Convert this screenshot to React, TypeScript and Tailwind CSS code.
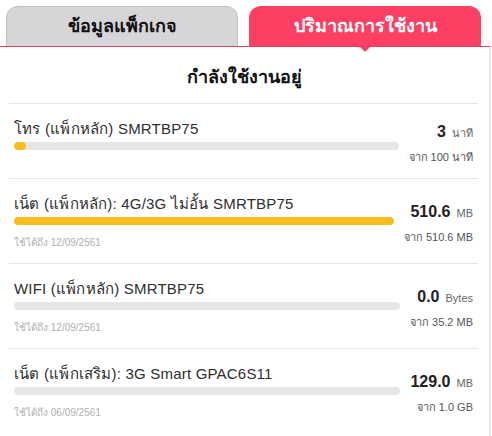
import React from 'react';

type Usage = {
  title: string;
  used: number;
  total: number;
  value: string;
  unit: string;
  of: string;
  expire?: string;
};

const rows: Usage[] = [
  { title: 'โทร (แพ็กหลัก) SMRTBP75', used: 3, total: 100, value: '3', unit: 'นาที', of: 'จาก 100 นาที' },
  { title: 'เน็ต (แพ็กหลัก): 4G/3G ไม่อั้น SMRTBP75', used: 510.6, total: 510.6, value: '510.6', unit: 'MB', of: 'จาก 510.6 MB', expire: '12/09/2561' },
  { title: 'WIFI (แพ็กหลัก) SMRTBP75', used: 0, total: 35.2, value: '0.0', unit: 'Bytes', of: 'จาก 35.2 MB', expire: '12/09/2561' },
  { title: 'เน็ต (แพ็กเสริม): 3G Smart GPAC6S11', used: 0, total: 1024, value: '129.0', unit: 'MB', of: 'จาก 1.0 GB', expire: '06/09/2561' },
];

function UsageRow({ row }: { row: Usage }) {
  const pct = Math.min(100, (row.used / row.total) * 100);
  return (
    <div className="flex items-center gap-[10px] border-t border-[#e6e6e6] pt-[15px] pb-[13px] pl-[5px] pr-[5px]">
      <div className="flex-1 self-start">
        <p className="text-[15px] leading-[20px] text-[#2e2e2e] tracking-[0.2px]">{row.title}</p>
        <div className="mt-[3px] h-[8px] rounded-full bg-[#e6e6e6] overflow-hidden">
          {pct > 0 && <div className="h-full min-w-[12px] rounded-full bg-[#fbbd1e]" style={{ width: `${pct}%` }} />}
        </div>
        {row.expire && (
          <p className="mt-[11px] text-[10px] leading-[14px] text-[#b0b0b0]">ใช้ได้ถึง {row.expire}</p>
        )}
      </div>
      <div className="pt-[3px] text-right">
        <p className="leading-[20px] text-[#222]">
          <span className="text-[16px] font-bold">{row.value}</span>
          <span className="ml-[6px] text-[11px] text-[#666]">{row.unit}</span>
        </p>
        <p className="mt-[6px] text-[11px] leading-[16px] text-[#555]">{row.of}</p>
      </div>
    </div>
  );
}

export default function App() {
  return (
    <div className="w-[492px] h-[436px] bg-white overflow-hidden font-['Liberation_Sans',sans-serif]">
      <div className="flex gap-[11px] pl-[6px] pt-[6px]">
        <div className="w-[232px] h-[40px] flex items-center justify-center rounded-t-[12px] bg-[#d6d6d9] border border-b-0 border-[#c3c3c6] text-[18px] font-bold text-[#111]">
          ข้อมูลแพ็กเกจ
        </div>
        <div className="w-[232px] h-[40px] flex items-center justify-center rounded-t-[12px] bg-[#fd3f63] text-[18px] font-bold text-white">
          ปริมาณการใช้งาน
        </div>
      </div>

      <div className="relative w-[491px] h-[390px] border-t border-[#e8405c] border-r-[2px] border-r-[#e8e8e8]">
        <div className="absolute left-[360px] top-0 w-0 h-0 border-x-[5px] border-x-transparent border-t-[5px] border-t-[#fd3f63]" />
        <h2 className="pt-[18px] pb-[14px] text-center text-[18px] leading-[24px] font-bold text-[#111]">กำลังใช้งานอยู่</h2>
        <div className="mx-[9px] w-[469px]">
          {rows.map((r) => (
            <UsageRow key={r.title} row={r} />
          ))}
        </div>
      </div>
    </div>
  );
}
